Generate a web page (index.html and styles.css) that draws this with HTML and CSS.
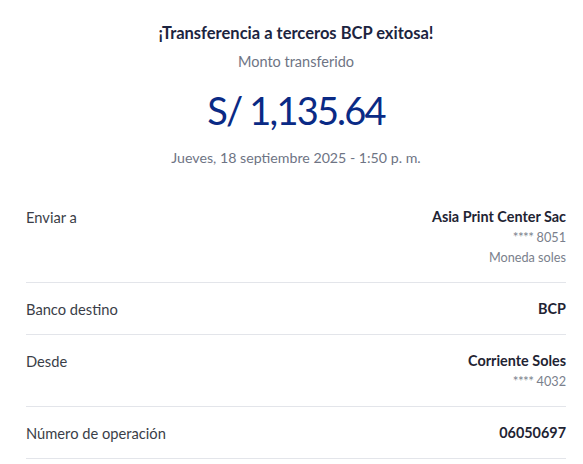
FILE: index.html
```html
<!DOCTYPE html>
<html lang="es">
<head>
<meta charset="utf-8">
<link rel="stylesheet" href="styles.css">
</head>
<body>
<main class="receipt">
  <header class="summary">
    <h1 class="title">¡Transferencia a terceros BCP exitosa!</h1>
    <p class="subtitle">Monto transferido</p>
    <p class="amount">S/ 1,135.64</p>
    <p class="date">Jueves, 18 septiembre 2025 - 1:50 p. m.</p>
  </header>
  <section class="details">
    <div class="row">
      <span class="label">Enviar a</span>
      <div class="value">
        <span class="strong">Asia Print Center Sac</span>
        <span class="muted"><span class="stars">****</span> 8051</span>
        <span class="muted">Moneda soles</span>
      </div>
    </div>
    <div class="row">
      <span class="label">Banco destino</span>
      <div class="value"><span class="strong">BCP</span></div>
    </div>
    <div class="row">
      <span class="label">Desde</span>
      <div class="value">
        <span class="strong">Corriente Soles</span>
        <span class="muted"><span class="stars">****</span> 4032</span>
      </div>
    </div>
    <div class="row">
      <span class="label">Número de operación</span>
      <div class="value"><span class="strong">06050697</span></div>
    </div>
  </section>
</main>
</body>
</html>
```

FILE: styles.css
```css
* { box-sizing: border-box; }
html, body { margin: 0; padding: 0; background: #fff; }
body { font-family: Lato, "Noto Sans", sans-serif; color: #2b2f3a; }
.receipt { width: 583px; padding: 0 17px 0 26px; }
.summary { display: flex; flex-direction: column; align-items: center; padding-top: 22px; }
.summary p, .summary h1 { margin: 0; }
.title { font-size: 16.5px; font-weight: 700; color: #1c2440; line-height: 22px; }
.summary .subtitle { margin-top: 8px; font-size: 14.5px; color: #6e7484; line-height: 20px; }
.summary .amount { margin-top: 14px; font-size: 38px; letter-spacing: -1.8px; color: #0a2a85; line-height: 48px; }
.summary .date { margin-top: 14px; font-size: 14.2px; color: #6e7484; line-height: 20px; }
.details { margin-top: 23px; }
.row { display: flex; justify-content: space-between; align-items: flex-start; padding: 16px 0 15px; border-bottom: 1px solid #e3e5ea; }
.label { font-size: 14.7px; color: #3a3e48; line-height: 20px; }
.value { display: flex; flex-direction: column; align-items: flex-end; }
.strong { font-size: 14.4px; font-weight: 700; color: #1f2433; line-height: 20px; }
.muted { font-size: 12.7px; color: #7a7f8c; line-height: 20px; }
.stars { font-size: 13.5px; letter-spacing: -0.6px; }
```
